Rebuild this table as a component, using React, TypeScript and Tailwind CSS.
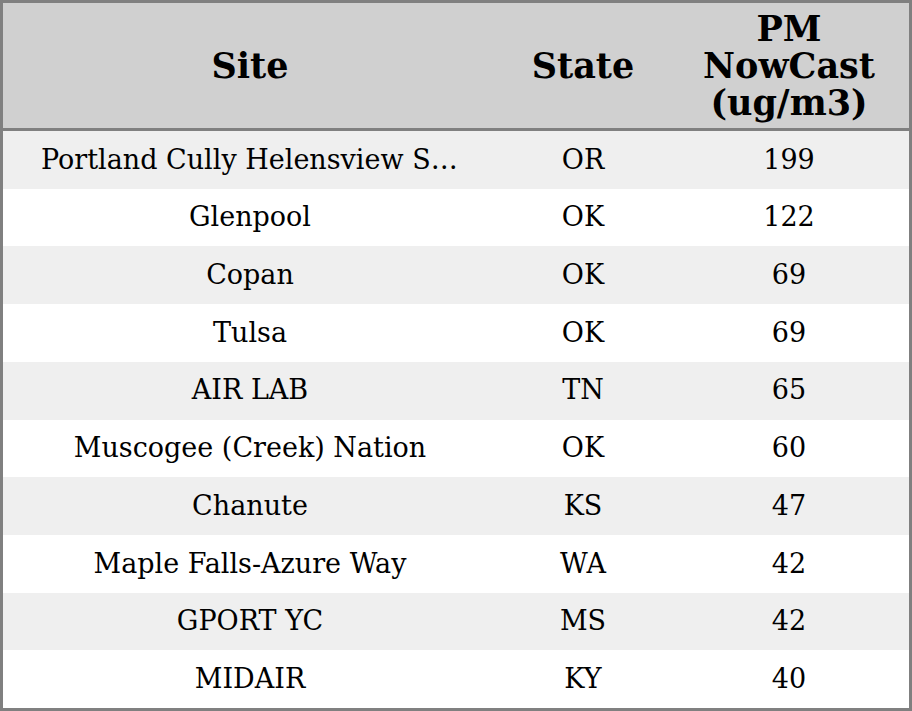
const rows = [
  { site: "Portland Cully Helensview Site", state: "OR", pm: 199 },
  { site: "Glenpool", state: "OK", pm: 122 },
  { site: "Copan", state: "OK", pm: 69 },
  { site: "Tulsa", state: "OK", pm: 69 },
  { site: "AIR LAB", state: "TN", pm: 65 },
  { site: "Muscogee (Creek) Nation", state: "OK", pm: 60 },
  { site: "Chanute", state: "KS", pm: 47 },
  { site: "Maple Falls-Azure Way", state: "WA", pm: 42 },
  { site: "GPORT YC", state: "MS", pm: 42 },
  { site: "MIDAIR", state: "KY", pm: 40 },
];

export default function App() {
  return (
    <div className="h-[711px] w-[912px] overflow-hidden bg-white font-['DejaVu_Serif',serif] text-black">
      <div className="flex h-full flex-col border-[3px] border-[#808080]">
        <div className="grid h-[128px] shrink-0 grid-cols-[494px_172px_240px] items-center border-b-[3px] border-[#808080] bg-[#d0d0d0] text-[35px] font-bold leading-[37px]">
          <div className="text-center">Site</div>
          <div className="text-center">State</div>
          <div className="text-center">
            PM
            <br />
            NowCast
            <br />
            (ug/m3)
          </div>
        </div>
        <div className="flex flex-1 flex-col text-[27px]">
          {rows.map((r, i) => (
            <div
              key={r.site}
              className={
                "grid flex-1 grid-cols-[494px_172px_240px] items-center " +
                (i % 2 === 0 ? "bg-[#efefef]" : "bg-white")
              }
            >
              <div className="truncate px-[38px] text-center">{r.site}</div>
              <div className="text-center">{r.state}</div>
              <div className="text-center">{r.pm}</div>
            </div>
          ))}
        </div>
      </div>
    </div>
  );
}
